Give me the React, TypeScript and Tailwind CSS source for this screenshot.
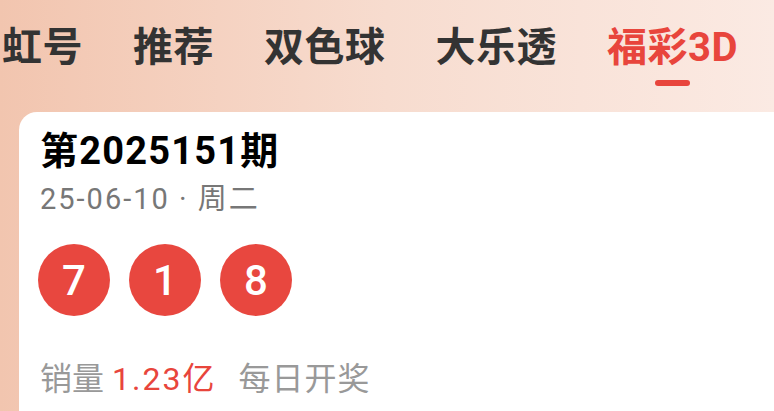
const tabs = ["虹号", "推荐", "双色球", "大乐透", "福彩3D"];
const balls = ["7", "1", "8"];

const font = { fontFamily: "Roboto, 'Noto Sans CJK SC', sans-serif" };

export default function App() {
  return (
    <div
      className="h-[411px] w-[774px] overflow-hidden bg-gradient-to-r from-[#f2c5af] via-[#f7dccf] to-[#fbeae3]"
      style={font}
    >
      <div className="flex h-[112px] items-start gap-[50px] pl-[2px] pt-[24px]">
        {tabs.map((t, i) => {
          const active = i === tabs.length - 1;
          return (
            <div key={t} className="flex flex-col items-center">
              <span
                className={`text-[40px] font-bold leading-[48px] tracking-[0.5px] ${
                  active ? "text-[#e8453c]" : "text-[#333333]"
                }`}
              >
                {t}
              </span>
              {active && (
                <span className="mt-[8px] h-[6px] w-[35px] rounded-full bg-[#e8453c]" />
              )}
            </div>
          );
        })}
      </div>

      <div className="ml-[19px] h-[320px] rounded-tl-[18px] bg-white pl-[21px] pt-[16px]">
        <div className="text-[38px] font-bold leading-[46px] tracking-[1.2px] text-black">
          第2025151期
        </div>
        <div className="mt-[7px] text-[29px] leading-[36px] tracking-[2px] text-[#777777]">
          25-06-10 · 周二
        </div>
        <div className="mt-[27px] flex gap-[19px] -ml-[2px]">
          {balls.map((b, i) => (
            <div
              key={i}
              className="flex h-[72px] w-[72px] items-center justify-center rounded-full bg-[#e8473f] text-[42px] font-medium text-white"
            >
              {b}
            </div>
          ))}
        </div>
        <div className="mt-[43px] flex items-baseline text-[32px] leading-[40px] text-[#999999]">
          <span>销量</span>
          <span className="ml-[8px] tracking-[2px] text-[#e8453c]">1.23亿</span>
          <span className="ml-[22px] tracking-[1px]">每日开奖</span>
        </div>
      </div>
    </div>
  );
}
